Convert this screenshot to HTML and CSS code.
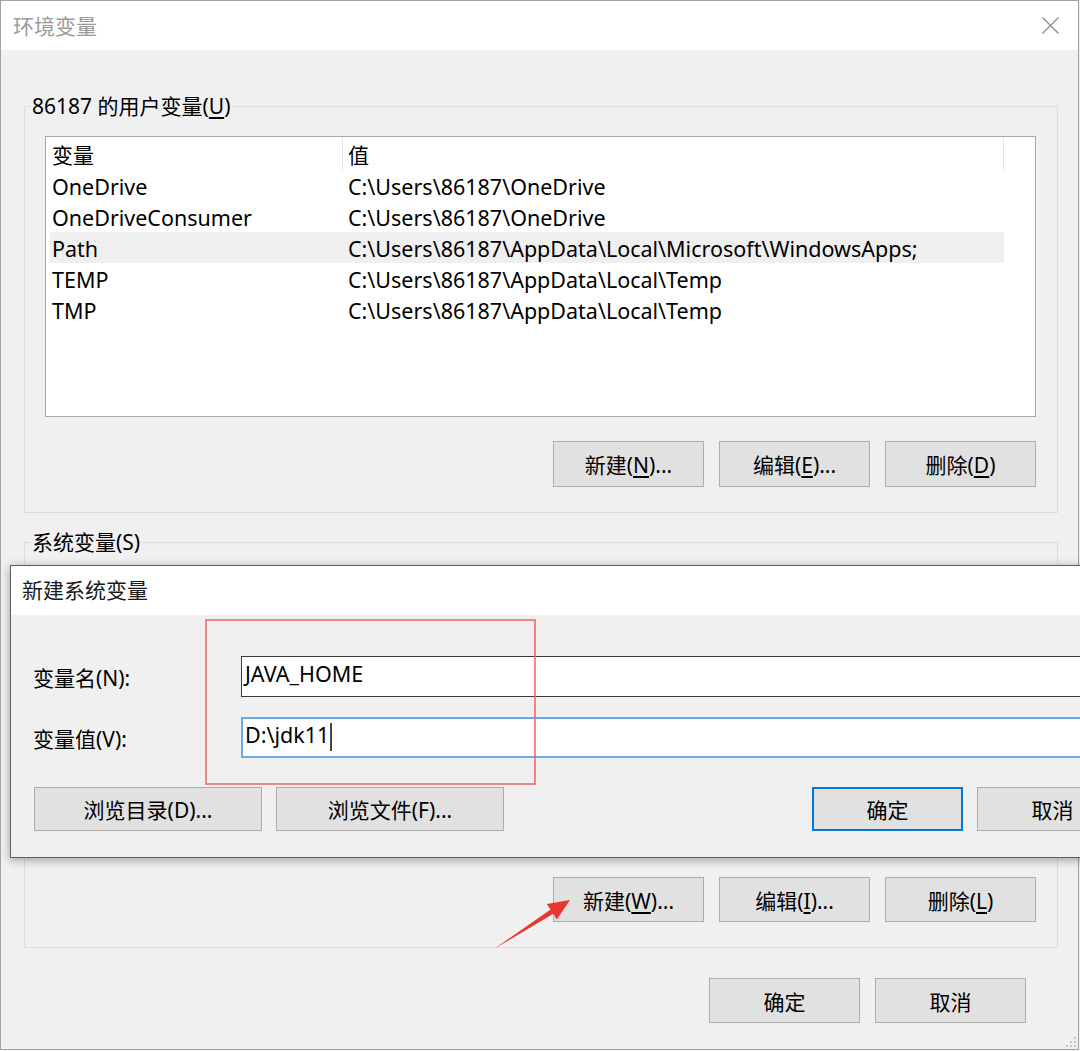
FILE: index.html
```html
<!DOCTYPE html>
<html lang="zh-CN">

<head>
    <meta charset="UTF-8">
    <meta name="viewport" content="width=device-width, initial-scale=1.0">
    <title>环境变量</title>

    <link rel="stylesheet" href="styles.css">
</head>

<body>

    <div class="screen">

        <!-- main window -->
        <div class="window">
            <div class="titlebar">
                <span class="title">环境变量</span>
                <svg class="close-icon" width="17" height="17" viewBox="0 0 17 17">
                    <path d="M0.5 0.5 L16.5 16.5 M16.5 0.5 L0.5 16.5" stroke="#8c8c8c" stroke-width="1.3" fill="none"/>
                </svg>
            </div>

            <div class="window-body">
                <fieldset class="group">
                    <legend>86187 的用户变量(<u>U</u>)</legend>
                    <div class="group-body">
                        <div class="listbox">
                            <div class="list-head">
                                <div class="head-cell">变量</div>
                                <div class="head-cell head-value">值</div>
                            </div>
                            <div class="list-row"><span class="cell-name">OneDrive</span><span class="cell-value">C:\Users\86187\OneDrive</span></div>
                            <div class="list-row"><span class="cell-name">OneDriveConsumer</span><span class="cell-value">C:\Users\86187\OneDrive</span></div>
                            <div class="list-row selected"><span class="cell-name">Path</span><span class="cell-value">C:\Users\86187\AppData\Local\Microsoft\WindowsApps;</span></div>
                            <div class="list-row"><span class="cell-name">TEMP</span><span class="cell-value">C:\Users\86187\AppData\Local\Temp</span></div>
                            <div class="list-row"><span class="cell-name">TMP</span><span class="cell-value">C:\Users\86187\AppData\Local\Temp</span></div>
                        </div>
                        <div class="button-row">
                            <button class="btn">新建(<u>N</u>)...</button>
                            <button class="btn">编辑(<u>E</u>)...</button>
                            <button class="btn">删除(<u>D</u>)</button>
                        </div>
                    </div>
                </fieldset>

                <fieldset class="group group-system">
                    <legend>系统变量(S)</legend>
                    <div class="group-body">
                        <div class="listbox"></div>
                        <div class="button-row">
                            <button class="btn">新建(<u>W</u>)...</button>
                            <button class="btn">编辑(<u>I</u>)...</button>
                            <button class="btn">删除(<u>L</u>)</button>
                        </div>
                    </div>
                </fieldset>

                <div class="button-row footer-row">
                    <button class="btn">确定</button>
                    <button class="btn">取消</button>
                </div>
            </div>

            <svg class="grip" width="12" height="12" viewBox="0 0 12 12">
                <rect x="10" y="2" width="2" height="2"/>
                <rect x="6" y="6" width="2" height="2"/>
                <rect x="10" y="6" width="2" height="2"/>
                <rect x="2" y="10" width="2" height="2"/>
                <rect x="6" y="10" width="2" height="2"/>
                <rect x="10" y="10" width="2" height="2"/>
            </svg>
        </div>

        <!-- new system variable dialog -->
        <div class="dialog">
            <div class="dialog-title">新建系统变量</div>
            <div class="dialog-body">
                <div class="field">
                    <label class="field-label">变量名(N):</label>
                    <div class="textbox">JAVA_HOME</div>
                </div>
                <div class="field">
                    <label class="field-label">变量值(V):</label>
                    <div class="textbox focused">D:\jdk11<span class="caret"></span></div>
                </div>
                <div class="dialog-buttons">
                    <button class="btn btn-wide">浏览目录(D)...</button>
                    <button class="btn btn-wide">浏览文件(F)...</button>
                    <span class="spacer"></span>
                    <button class="btn btn-default">确定</button>
                    <button class="btn">取消</button>
                </div>
            </div>
        </div>

        <!-- red annotations -->
        <div class="mark-box"></div>
        <svg class="mark-arrow" width="85" height="58" viewBox="0 0 85 58">
            <polygon points="4,54 63.4,18.8 66.8,24.5 80,5 56.8,9 60.6,14.4" fill="#e8372c"/>
        </svg>

    </div>

</body>

</html>
```

FILE: styles.css
```css
html,
body {
    margin: 0;
    padding: 0;
    background-color: #f0f0f0;
}

body {
    font-family: "Noto Sans", "Noto Sans CJK SC", sans-serif;
    font-size: 21px;
    color: #000;
}

.screen {
    position: relative;
    width: 1080px;
    height: 1051px;
    overflow: hidden;
}

.window {
    position: relative;
    width: 1079px;
    height: 1050px;
    box-sizing: border-box;
    border: 1px solid #a3a3a3;
    background-color: #f0f0f0;
}

.titlebar {
    height: 49px;
    background-color: #fff;
    display: flex;
    align-items: center;
    justify-content: space-between;
    padding: 0 19px 0 12px;
}

.title {
    color: #9a9a9a;
    line-height: 49px;
    padding-top: 2px;
}

.close-icon {
    display: block;
}

.window-body {
    padding: 42px 20px 0 23px;
}

.group {
    margin: 0;
    padding: 0;
    min-width: 0;
    border: 1px solid #dcdcdc;
}

.group legend {
    margin-left: 6px;
    padding: 0 1px;
    line-height: 28px;
}

.group-system {
    margin-top: 15px;
}

.group-body {
    padding: 16px 21px 25px 20px;
}

u {
    text-underline-offset: 3px;
}

.listbox {
    height: 281px;
    box-sizing: border-box;
    border: 1px solid #a9a9a9;
    background-color: #fff;
    padding-left: 4px;
    font-size: 21.5px;
}

.list-head,
.list-row {
    display: grid;
    grid-template-columns: 293px 661px;
    width: 954px;
}

.head-cell {
    height: 33px;
    box-sizing: border-box;
    padding: 4px 0 0 2px;
    line-height: 29px;
    font-size: 21px;
    border-right: 1px solid #e5e5e5;
}

.head-value {
    padding-left: 5px;
}

.list-row {
    height: 31px;
    box-sizing: border-box;
    padding-top: 3px;
    line-height: 28px;
}

.list-row.selected {
    background-color: #efefef;
}

.cell-name {
    padding-left: 2px;
}

.cell-value {
    padding-left: 5px;
    white-space: nowrap;
}

.button-row {
    display: flex;
    justify-content: flex-end;
    gap: 15px;
    margin-top: 24px;
}

.btn {
    width: 151px;
    height: 46px;
    box-sizing: border-box;
    padding: 0;
    border: 1px solid #adadad;
    background-color: #e1e1e1;
    font-family: inherit;
    font-size: 21px;
    color: #000;
}

.group-system .btn {
    height: 45px;
}

.footer-row {
    margin-top: 30px;
    margin-right: 32px;
}

.footer-row .btn {
    height: 45px;
}

.grip {
    position: absolute;
    right: 2px;
    bottom: 2px;
    fill: #c4c4c4;
}

/* dialog on top of the main window */
.dialog {
    position: absolute;
    left: 10px;
    top: 565px;
    width: 1140px;
    box-sizing: border-box;
    border: 1px solid #5e5e5e;
    background-color: #f0f0f0;
    box-shadow: 0 2px 9px rgba(0, 0, 0, 0.35);
}

.dialog-title {
    height: 49px;
    line-height: 49px;
    padding-left: 11px;
    background-color: #fff;
    color: #1a1a1a;
}

.dialog-body {
    padding: 41px 21px 26px 22px;
}

.field {
    display: flex;
    align-items: center;
    margin-bottom: 20px;
}

.field-label {
    width: 208px;
    flex: none;
}

.textbox {
    flex: 1;
    height: 41px;
    box-sizing: border-box;
    border: 1px solid #3a3a3a;
    background-color: #fff;
    padding: 0 0 6px 3px;
    line-height: 30px;
    font-size: 21.5px;
    display: flex;
    align-items: center;
}

.textbox.focused {
    border: 2px solid #6aaae8;
    padding-left: 2px;
}

.caret {
    display: inline-block;
    width: 2px;
    height: 28px;
    margin: 4px 0 0 1px;
    background-color: #444;
}

.dialog-buttons {
    display: flex;
    gap: 14px;
    margin-top: 29px;
    margin-left: 1px;
}

.dialog-buttons .btn {
    height: 44px;
}

.btn-wide {
    width: 228px;
}

.spacer {
    flex: 1;
}

.btn-default {
    border: 2px solid #0078d7;
}

.mark-box {
    position: absolute;
    left: 205px;
    top: 619px;
    width: 331px;
    height: 166px;
    box-sizing: border-box;
    border: 2px solid rgba(236, 100, 100, 0.75);
}

.mark-arrow {
    position: absolute;
    left: 490px;
    top: 895px;
}
```
